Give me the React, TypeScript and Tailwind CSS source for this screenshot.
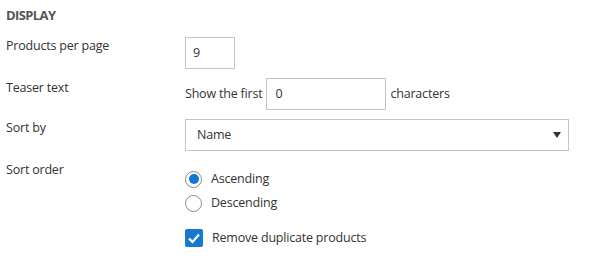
import React from "react";

export default function App() {
  return (
    <div className="w-[592px] h-[261px] bg-white text-[#333] text-[12.5px] tracking-[-0.2px] leading-[18px] pl-[6px] pt-[6px] font-['Open_Sans',sans-serif]">
      <div className="font-bold text-[13px] text-[#555] tracking-[-0.6px]">DISPLAY</div>
      <div className="flex mt-[13px]">
        <div className="w-[179px]">Products per page</div>
        <div className="w-[50px] h-[32px] border border-[#c4c4c4] pl-[7px] flex items-center">9</div>
      </div>
      <div className="flex mt-[9px]">
        <div className="w-[179px] pt-[1px]">Teaser text</div>
        <div className="flex items-center">
          <span>Show the first</span>
          <div className="ml-[4px] w-[120px] h-[32px] border border-[#c4c4c4] pl-[8px] flex items-center">0</div>
          <span className="ml-[4px]">characters</span>
        </div>
      </div>
      <div className="flex mt-[9px]">
        <div className="w-[179px]">Sort by</div>
        <div className="w-[384px] h-[32px] border border-[#c4c4c4] pl-[11px] pr-[7px] flex items-center justify-between">
          <span>Name</span>
          <svg width="8" height="6" viewBox="0 0 8 6"><path d="M0 0H8L4 6Z" fill="#333" /></svg>
        </div>
      </div>
      <div className="flex mt-[10px]">
        <div className="w-[179px]">Sort order</div>
        <div className="flex flex-col pt-[6px]">
          <div className="flex items-center h-[24px]">
            <span className="w-[17px] h-[17px] rounded-full border border-[#8a8a8a] flex items-center justify-center">
              <span className="w-[10px] h-[10px] rounded-full bg-[#0f78d4]" />
            </span>
            <span className="ml-[9px]">Ascending</span>
          </div>
          <div className="flex items-center h-[24px]">
            <span className="w-[17px] h-[17px] rounded-full border border-[#8a8a8a]" />
            <span className="ml-[9px]">Descending</span>
          </div>
          <div className="flex items-center mt-[14px]">
            <span className="w-[18px] h-[18px] rounded-[2px] bg-[#1579cf] flex items-center justify-center">
              <svg width="14" height="14" viewBox="0 0 14 14"><path d="M2 7.5L5.5 11L12 3.5" fill="none" stroke="#fff" strokeWidth="2.2" /></svg>
            </span>
            <span className="ml-[9px]">Remove duplicate products</span>
          </div>
        </div>
      </div>
    </div>
  );
}
